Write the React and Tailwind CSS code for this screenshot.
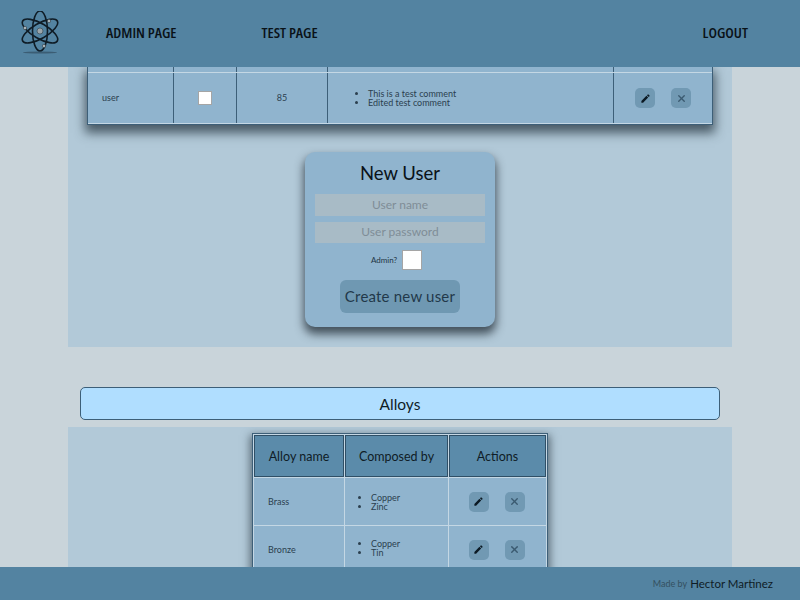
import { MdEdit } from 'react-icons/md'
import { X } from 'lucide-react'

const bodyFont = 'font-["Lato",sans-serif]'

function Logo() {
  return (
    <svg width="40" height="46" viewBox="0 0 40 46" fill="none">
      <g stroke="#0f1c26" strokeWidth="1.6">
        <ellipse cx="20" cy="20" rx="7.5" ry="20" />
        <ellipse cx="20" cy="20" rx="7.5" ry="20" transform="rotate(60 20 20)" />
        <ellipse cx="20" cy="20" rx="7.5" ry="20" transform="rotate(-60 20 20)" />
      </g>
      <circle cx="20" cy="20" r="3" fill="#9aa5ab" stroke="#2c3a44" strokeWidth="0.6" />
      <circle cx="29" cy="10" r="1.7" fill="#aab3b8" stroke="#1c2a33" strokeWidth="0.5" />
      <circle cx="5" cy="17" r="1.7" fill="#aab3b8" stroke="#1c2a33" strokeWidth="0.5" />
      <circle cx="24" cy="35" r="1.7" fill="#aab3b8" stroke="#1c2a33" strokeWidth="0.5" />
      <ellipse cx="20" cy="41.5" rx="17" ry="1" fill="#2c4456" opacity="0.6" />
    </svg>
  )
}

function ActionButtons() {
  return (
    <div className="flex items-center justify-center gap-[16px]">
      <button className="flex h-5 w-5 items-center justify-center rounded-[5px] bg-[#7199b3] text-[11px] text-[#0c1a24]">
        <MdEdit />
      </button>
      <button className="flex h-5 w-5 items-center justify-center rounded-[5px] bg-[#7199b3] text-[#3b5a70]">
        <X size={11} strokeWidth={3} />
      </button>
    </div>
  )
}

function NavLink({ children, className }) {
  return (
    <a className={`pb-[2px] font-["Open_Sans",sans-serif] text-[15px] font-semibold text-[#0a1218] [font-stretch:75%] ${className}`}>
      {children}
    </a>
  )
}

function UsersTable() {
  return (
    <div className="mx-[19px] h-[58px] overflow-hidden border-x border-b border-x-[#3d5f78] border-b-[#3d5f78] bg-[#90b4ce] shadow-[0_6px_10px_2px_rgba(30,45,55,0.7)]">
      <div className="grid h-[57px] grid-cols-[86px_63px_91px_286px_1fr] grid-rows-[5px_1px_1fr_1px] text-[#2b3f4e]">
        <div className="border-r border-[#3d5f78]" />
        <div className="border-r border-[#3d5f78]" />
        <div className="border-r border-[#3d5f78]" />
        <div className="border-r border-[#3d5f78]" />
        <div />
        <div className="col-span-5 bg-[#c4d7e4]" />
        <div className="flex items-center border-r border-[#3d5f78] pl-[14px] text-[9px]">user</div>
        <div className="flex items-center justify-center border-r border-[#3d5f78]">
          <input type="checkbox" className="h-[14px] w-[14px] appearance-none border border-[#a5a5a5] bg-white" />
        </div>
        <div className="flex items-center justify-center border-r border-[#3d5f78] text-[9px]">85</div>
        <div className="flex items-center border-r border-[#3d5f78] pl-[40px] text-[9px] leading-[9px]">
          <ul className="list-disc">
            <li>This is a test comment</li>
            <li>Edited test comment</li>
          </ul>
        </div>
        <ActionButtons />
        <div className="col-span-5 bg-[#c4d7e4]" />
      </div>
    </div>
  )
}

function NewUserForm() {
  return (
    <div className="mx-auto mt-[27px] flex h-[175px] w-[190px] flex-col items-center rounded-[10px] bg-[#90b4ce] px-[10px] pt-[10px] shadow-[0_6px_10px_1px_rgba(30,40,50,0.75)]">
      <h2 className="text-[18.5px] leading-[23px] text-[#0a1218]">New User</h2>
      <input
        placeholder="User name"
        className="mt-[9px] h-[22px] w-full bg-[#a8bbc6] pb-[2px] text-center text-[12px] placeholder:text-[#7f8d97]"
      />
      <input
        placeholder="User password"
        className="mt-[6px] h-[21px] w-full bg-[#a8bbc6] pb-[2px] text-center text-[12px] placeholder:text-[#7f8d97]"
      />
      <label className="mt-[7px] flex h-[20px] items-center gap-[5px] pr-[7px] text-[8px] text-[#1f3444]">
        Admin?
        <input type="checkbox" className="h-[20px] w-[20px] appearance-none border border-[#a5a5a5] bg-white" />
      </label>
      <button className="mt-[10px] h-[33px] w-[120px] rounded-[6px] bg-[#6f98b2] text-[15px] tracking-[0.2px] text-[#22384a]">
        Create new user
      </button>
    </div>
  )
}

function AlloyRow({ name, parts, listClass }) {
  return (
    <>
      <div className="flex items-center bg-[#90b4ce] pl-[14px] text-[9px] text-[#2b3f4e]">{name}</div>
      <div className={`flex items-center bg-[#90b4ce] pl-[26px] text-[9px] leading-[9px] text-[#2b3f4e] ${listClass}`}>
        <ul className="list-disc">
          {parts.map((part) => (
            <li key={part}>{part}</li>
          ))}
        </ul>
      </div>
      <div className="flex items-center justify-center bg-[#90b4ce] pr-[2px]">
        <ActionButtons />
      </div>
    </>
  )
}

function AlloysTable() {
  return (
    <div className="mx-auto mt-[6px] h-[140px] w-[296px] border border-[#3d5f78] bg-[#c4d7e4] p-px shadow-[0_4px_8px_2px_rgba(30,45,55,0.6)]">
      <div className="grid grid-cols-[90px_103px_1fr] grid-rows-[42px_47px_47px] gap-px text-[#0f1c26]">
        {['Alloy name', 'Composed by', 'Actions'].map((heading) => (
          <div key={heading} className="flex items-center justify-center border border-[#2f4f66] bg-[#5b8baa] pt-[2px] text-[12.5px]">
            {heading}
          </div>
        ))}
        <AlloyRow name="Brass" parts={['Copper', 'Zinc']} listClass="pb-0" />
        <AlloyRow name="Bronze" parts={['Copper', 'Tin']} listClass="pb-[3px]" />
      </div>
    </div>
  )
}

export default function App() {
  return (
    <div className={`flex h-screen flex-col overflow-hidden bg-[#c9d4da] ${bodyFont}`}>
      <header className="flex h-[67px] shrink-0 items-center bg-[#5383a1] pl-[20px] pr-[52px]">
        <Logo />
        <NavLink className="ml-[46px]">ADMIN PAGE</NavLink>
        <NavLink className="ml-[85px]">TEST PAGE</NavLink>
        <NavLink className="ml-auto">LOGOUT</NavLink>
      </header>

      <main className="flex-1 overflow-hidden">
        <section className="mx-[68px] h-[280px] bg-[#b2c9d8]">
          <UsersTable />
          <NewUserForm />
        </section>

        <div className="mx-[80px] mt-[40px] flex h-[33px] items-center justify-center rounded-[5px] border border-[#3d5f78] bg-[#b0deff] pt-[2px] text-[15.5px] text-[#0f1c26]">
          Alloys
        </div>

        <section className="mx-[68px] mt-[7px] h-[200px] overflow-hidden bg-[#b2c9d8]">
          <AlloysTable />
        </section>
      </main>

      <footer className="flex h-[33px] shrink-0 items-center justify-end bg-[#5383a1] pr-[27px] text-[#0f1c26]">
        <span className="mr-[3px] text-[9px] text-[#33505f]">Made by</span>
        <span className="text-[11.5px]">Hector Martinez</span>
      </footer>
    </div>
  )
}
